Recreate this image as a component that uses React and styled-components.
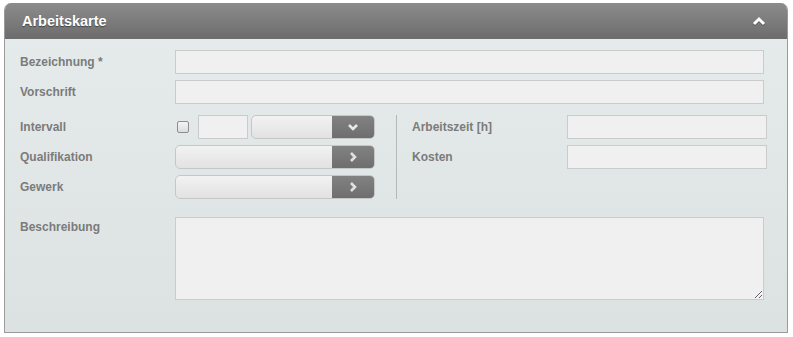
import React from 'react'
import styled, { createGlobalStyle } from 'styled-components'

const GlobalStyle = createGlobalStyle`
  body {
    margin: 0;
    background: #ffffff;
    font-family: "Liberation Sans", Arial, sans-serif;
  }
`

const ChevronUp = () => (
  <svg width="14" height="10" viewBox="0 0 14 10">
    <polyline points="2,8 7,3 12,8" fill="none" stroke="#ffffff" strokeWidth="3" />
  </svg>
)

const ChevronDown = () => (
  <svg width="12" height="8" viewBox="0 0 12 8">
    <polyline points="2,2 6,6 10,2" fill="none" stroke="#e8e8e8" strokeWidth="2.6" />
  </svg>
)

const ChevronRight = () => (
  <svg width="8" height="12" viewBox="0 0 8 12">
    <polyline points="2,2 6,6 2,10" fill="none" stroke="#e0e0e0" strokeWidth="2.6" />
  </svg>
)

const App = () => (
  <>
    <GlobalStyle />
    <Panel>
      <PanelHeader>
        <PanelTitle>Arbeitskarte</PanelTitle>
        <CollapseButton><ChevronUp /></CollapseButton>
      </PanelHeader>
      <PanelBody>
        <FieldRow>
          <Label>Bezeichnung *</Label>
          <TextInput />
        </FieldRow>
        <FieldRow>
          <Label>Vorschrift</Label>
          <TextInput />
        </FieldRow>
        <Split>
          <Column>
            <FieldRow>
              <Label>Intervall</Label>
              <Inline>
                <Checkbox type="checkbox" />
                <SmallInput />
                <Picker narrow>
                  <PickerButton><ChevronDown /></PickerButton>
                </Picker>
              </Inline>
            </FieldRow>
            <FieldRow>
              <Label>Qualifikation</Label>
              <Picker>
                <PickerButton><ChevronRight /></PickerButton>
              </Picker>
            </FieldRow>
            <FieldRow>
              <Label>Gewerk</Label>
              <Picker>
                <PickerButton><ChevronRight /></PickerButton>
              </Picker>
            </FieldRow>
          </Column>
          <Divider />
          <Column right>
            <FieldRow>
              <Label>Arbeitszeit [h]</Label>
              <TextInput short />
            </FieldRow>
            <FieldRow>
              <Label>Kosten</Label>
              <TextInput short />
            </FieldRow>
          </Column>
        </Split>
        <FieldRow top>
          <Label top>Beschreibung</Label>
          <TextArea />
        </FieldRow>
      </PanelBody>
    </Panel>
  </>
)

export default App

const Panel = styled.div`
  margin: 3px 5px 0 4px;
  width: 784px;
  box-sizing: border-box;
  border: 1px solid #9a9a9a;
  border-top: none;
  border-radius: 7px 7px 0 0;
  overflow: hidden;
`
const PanelHeader = styled.div`
  display: flex;
  align-items: center;
  justify-content: space-between;
  height: 36px;
  padding: 0 21px 0 17px;
  background: linear-gradient(#8c8c8c, #6c6c6c);
`
const PanelTitle = styled.div`
  color: #ffffff;
  font-size: 14.5px;
  font-weight: bold;
  text-shadow: 0 1px 1px rgba(0, 0, 0, 0.45);
`
const CollapseButton = styled.div`
  display: flex;
  align-items: center;
  filter: drop-shadow(0 1px 0 rgba(0, 0, 0, 0.3));
`
const PanelBody = styled.div`
  display: flex;
  flex-direction: column;
  gap: 6px;
  padding: 11px 23px 32px 15px;
  background: linear-gradient(#e5ebeb, #dce2e2);
`
const FieldRow = styled.div`
  display: flex;
  align-items: ${({ top }) => (top ? 'flex-start' : 'center')};
  margin-top: ${({ top }) => (top ? '12px' : 0)};
`
const Label = styled.div`
  flex: 0 0 155px;
  padding-top: ${({ top }) => (top ? '3px' : 0)};
  color: #7b7b7b;
  font-size: 12px;
  font-weight: bold;
`
const TextInput = styled.input`
  box-sizing: border-box;
  height: 24px;
  width: ${({ short }) => (short ? '200px' : 'auto')};
  flex: ${({ short }) => (short ? '0 0 200px' : 1)};
  border: 1px solid #cbcbcb;
  background: #f0f0f0;
  outline: none;
`
const Split = styled.div`
  display: flex;
  margin-top: 5px;
`
const Column = styled.div`
  display: flex;
  flex-direction: column;
  flex-shrink: 0;
  gap: 6px;
  width: ${({ right }) => (right ? 'auto' : '355px')};
  padding-left: ${({ right }) => (right ? '15px' : 0)};
`
const Divider = styled.div`
  flex: 0 0 1px;
  margin-left: 21px;
  background: #b4b8b8;
`
const Inline = styled.div`
  display: flex;
  align-items: center;
`
const Checkbox = styled.input`
  appearance: none;
  box-sizing: border-box;
  width: 12px;
  height: 12px;
  margin: 0 9px 0 2px;
  border: 1px solid #8e8e8e;
  border-radius: 2px;
  background: linear-gradient(#f4f4f4, #dcdcdc);
`
const SmallInput = styled.input`
  box-sizing: border-box;
  width: 50px;
  height: 24px;
  margin-right: 3px;
  border: 1px solid #cbcbcb;
  background: #f0f0f0;
  outline: none;
`
const Picker = styled.div`
  box-sizing: border-box;
  display: flex;
  justify-content: flex-end;
  width: ${({ narrow }) => (narrow ? '124px' : '200px')};
  height: 24px;
  border: 1px solid #c6c6c6;
  border-radius: 5px;
  background: linear-gradient(#f2f2f2, #e2e2e2);
  overflow: hidden;
`
const PickerButton = styled.div`
  display: flex;
  align-items: center;
  justify-content: center;
  width: 42px;
  background: linear-gradient(#828282, #6e6e6e);
`
const TextArea = styled.textarea`
  box-sizing: border-box;
  flex: 1;
  height: 83px;
  border: 1px solid #cbcbcb;
  background: #f0f0f0;
  outline: none;
`
